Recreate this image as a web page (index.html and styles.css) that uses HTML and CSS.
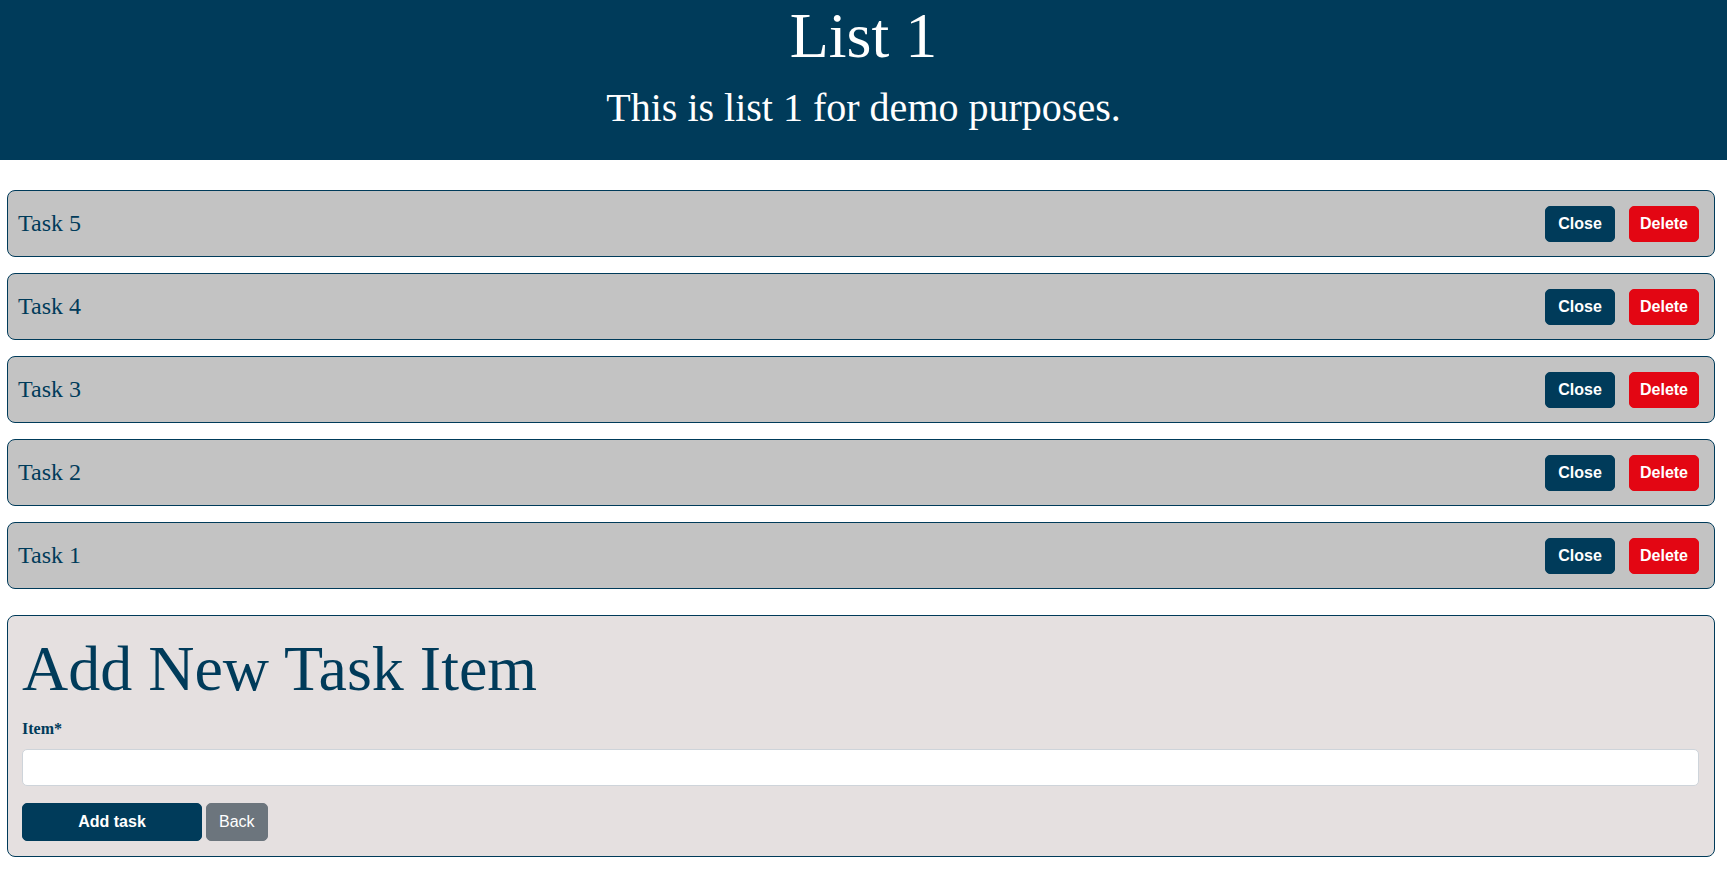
FILE: index.html
```html
<!DOCTYPE html>
<html lang="en">
<head>
<meta charset="utf-8">
<title>List 1</title>
<link rel="stylesheet" href="styles.css">
</head>
<body>
<header class="hero">
  <h1 class="hero-title">List 1</h1>
  <p class="hero-sub">This is list 1 for demo purposes.</p>
</header>
<main class="content">
  <ul class="task-list">
    <li class="task"><span class="task-name">Task 5</span><div class="task-actions"><button class="btn btn-close">Close</button><button class="btn btn-delete">Delete</button></div></li>
    <li class="task"><span class="task-name">Task 4</span><div class="task-actions"><button class="btn btn-close">Close</button><button class="btn btn-delete">Delete</button></div></li>
    <li class="task"><span class="task-name">Task 3</span><div class="task-actions"><button class="btn btn-close">Close</button><button class="btn btn-delete">Delete</button></div></li>
    <li class="task"><span class="task-name">Task 2</span><div class="task-actions"><button class="btn btn-close">Close</button><button class="btn btn-delete">Delete</button></div></li>
    <li class="task"><span class="task-name">Task 1</span><div class="task-actions"><button class="btn btn-close">Close</button><button class="btn btn-delete">Delete</button></div></li>
  </ul>
  <form class="add-card">
    <h2 class="add-title">Add New Task Item</h2>
    <label class="field-label" for="item">Item*</label>
    <input class="field-input" id="item" type="text">
    <div class="form-actions">
      <button type="button" class="btn btn-add">Add task</button>
      <button type="button" class="btn btn-back">Back</button>
    </div>
  </form>
</main>
</body>
</html>
```

FILE: styles.css
```css
* { box-sizing: border-box; }

body {
  margin: 0;
  font-family: "Liberation Serif", "Times New Roman", serif;
  background: #ffffff;
  color: #003b5a;
}

.hero {
  height: 160px;
  background: #003b5a;
  color: #ffffff;
  text-align: center;
  padding-top: 4px;
}

.hero-title {
  margin: 0;
  font-size: 64px;
  font-weight: normal;
  line-height: 64px;
}

.hero-sub {
  margin: 20px 0 0;
  font-size: 40px;
  line-height: 40px;
}

.content {
  padding: 30px 12px 14px 7px;
}

.task-list {
  list-style: none;
  margin: 0;
  padding: 0;
  display: flex;
  flex-direction: column;
  gap: 16px;
}

.task {
  height: 67px;
  display: flex;
  align-items: center;
  justify-content: space-between;
  padding: 0 15px 0 10px;
  background: #c3c3c3;
  border: 1px solid #003b5a;
  border-radius: 8px;
}

.task-name {
  font-size: 24px;
  color: #003b5a;
}

.task-actions {
  display: flex;
  gap: 14px;
}

.btn {
  font-family: "Liberation Sans", Arial, sans-serif;
  font-size: 16px;
  color: #ffffff;
  border: 1px solid transparent;
  border-radius: 5px;
  cursor: pointer;
  padding: 0;
}

.btn-close,
.btn-delete {
  width: 70px;
  height: 36px;
  font-weight: bold;
}

.btn-close { background: #003b5a; border-color: #003b5a; }
.btn-delete { background: #e30613; border-color: #e30613; }

.add-card {
  margin-top: 26px;
  background: #e5e0e0;
  border: 1px solid #003b5a;
  border-radius: 8px;
  padding: 14px 15px 15px 14px;
  display: flex;
  flex-direction: column;
}

.add-title {
  margin: 7px 0 0;
  font-size: 64px;
  font-weight: normal;
  line-height: 64px;
  color: #003b5a;
}

.field-label {
  margin-top: 16px;
  font-size: 16px;
  font-weight: bold;
  line-height: 24px;
  color: #003b5a;
}

.field-input {
  margin-top: 8px;
  height: 37px;
  border: 1px solid #ced4da;
  border-radius: 5px;
  background: #ffffff;
  font-size: 16px;
  padding: 6px 12px;
}

.form-actions {
  margin-top: 17px;
  display: flex;
  gap: 4px;
}

.btn-add {
  width: 180px;
  height: 38px;
  font-weight: bold;
  background: #003b5a;
  border-color: #003b5a;
}

.btn-back {
  height: 38px;
  padding: 0 12px;
  background: #6c757d;
  border-color: #6c757d;
}
```
